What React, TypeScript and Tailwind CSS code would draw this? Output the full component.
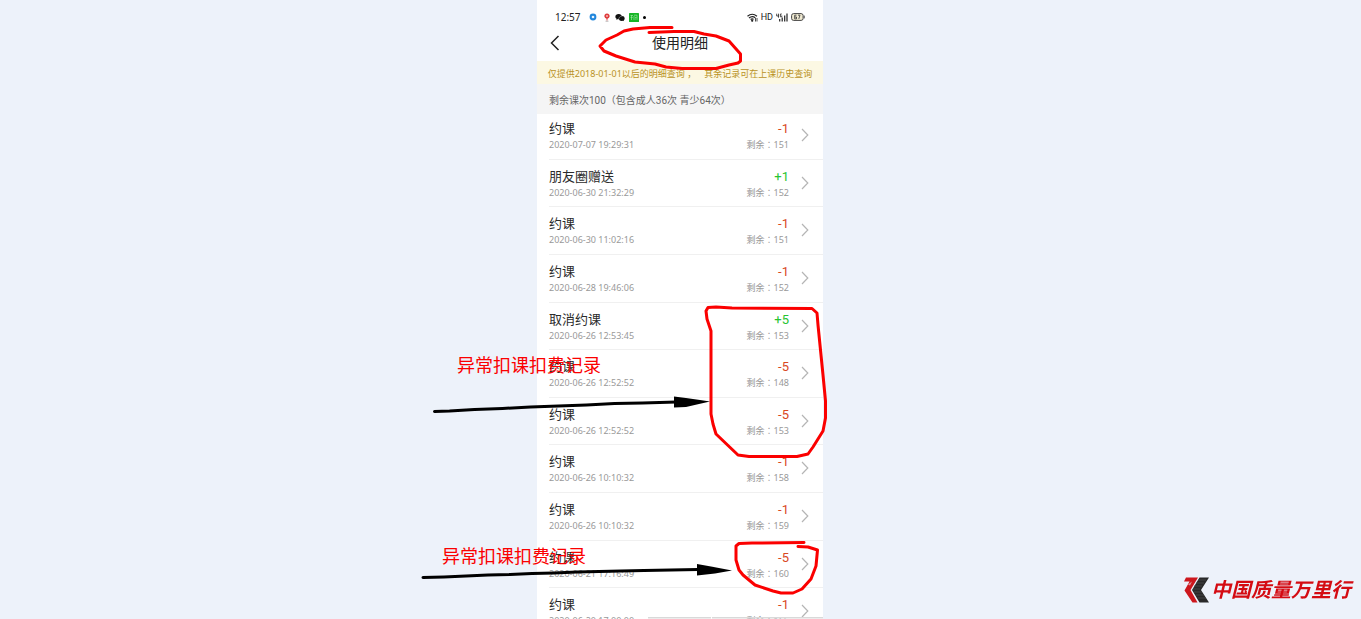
type RecordItem = { title: string; time: string; change: string; left: number };

const records: RecordItem[] = [
  { title: "约课", time: "2020-07-07 19:29:31", change: "-1", left: 151 },
  { title: "朋友圈赠送", time: "2020-06-30 21:32:29", change: "+1", left: 152 },
  { title: "约课", time: "2020-06-30 11:02:16", change: "-1", left: 151 },
  { title: "约课", time: "2020-06-28 19:46:06", change: "-1", left: 152 },
  { title: "取消约课", time: "2020-06-26 12:53:45", change: "+5", left: 153 },
  { title: "约课", time: "2020-06-26 12:52:52", change: "-5", left: 148 },
  { title: "约课", time: "2020-06-26 12:52:52", change: "-5", left: 153 },
  { title: "约课", time: "2020-06-26 10:10:32", change: "-1", left: 158 },
  { title: "约课", time: "2020-06-26 10:10:32", change: "-1", left: 159 },
  { title: "约课", time: "2020-06-21 17:16:49", change: "-5", left: 160 },
  { title: "约课", time: "2020-06-20 17:00:00", change: "-1", left: 165 },
];

function StatusBar() {
  return (
    <div className="flex h-6 items-end justify-between pl-[18px] pr-[18px] text-[10px] leading-[14px] text-[#222]">
      <div className="flex items-center">
        <span className="font-['Noto_Sans']">12:57</span>
        <svg className="ml-2" width="8" height="8" viewBox="0 0 8 8" aria-hidden="true">
          <circle cx="4" cy="4" r="3.4" fill="#2287dc" />
          <circle cx="4" cy="4" r="1.3" fill="#e8f4ff" />
        </svg>
        <svg className="ml-1.5" width="8" height="9" viewBox="0 0 8 9" aria-hidden="true">
          <path d="M4 8.4 3.3 5.6A2.6 2.6 0 1 1 4.7 5.6Z" fill="#df3b3b" />
          <circle cx="4" cy="3" r="1" fill="#f3b9b9" />
          <path d="M2.5 8.2h3" stroke="#999" strokeWidth=".7" />
        </svg>
        <svg className="ml-1" width="10" height="9" viewBox="0 0 11 9" aria-hidden="true">
          <path d="M4 .7C1.900.7.4 2 .4 3.600c0 .9.500 1.700 1.300 2.200L1.300 7l1.400-.7 1 .2 4.500-1.500C7.800 2 6.400.7 4 .7Z" fill="#111" />
          <ellipse cx="7.400" cy="5.600" rx="3.200" ry="2.700" fill="#111" />
          <path d="m8.500 7.500 1.100 1-.1-1.600Z" fill="#111" />
          <path d="M4.200 6.800C3.800 4.600 5.500 3.200 7.600 3" stroke="#fff" strokeWidth=".4" fill="none" />
        </svg>
        <svg className="ml-1" width="10" height="9" viewBox="0 0 10 9" aria-hidden="true">
          <rect width="10" height="9" rx=".6" fill="#16b526" />
          <path d="M1.500 2.500h2.500M1.500 4.500h2.200M2.500 2v5M5 2.200h3v4.600M5 3v4M6 4.500h1.500M6 6h1" stroke="#98e59e" strokeWidth=".7" fill="none" />
        </svg>
        <span className="ml-1 h-[3px] w-[3px] rounded-full bg-black" />
      </div>
      <div className="flex items-center gap-[3px]">
        <svg width="11" height="9" viewBox="0 0 11 9" fill="none" stroke="#222" strokeWidth="1.200" aria-hidden="true">
          <path d="M.5 3.200Q5.200-.7 10 3.200M2 5Q5.200 2.300 8.300 4.800M3.600 6.500Q5.200 5.300 6.600 6.400" />
          <circle cx="5.200" cy="7.700" r=".5" fill="#222" />
          <path d="M8.500 5v3.500M10 5v3.500" strokeWidth=".8" />
        </svg>
        <span className="font-['Roboto'] text-[9px]">HD</span>
        <svg width="12" height="9" viewBox="0 0 12 9" fill="none" stroke="#222" aria-hidden="true">
          <path d="M.7.700v2.300h2M2.500.7v4M5.800 1H4.400v2.800h1.400V2.500" strokeWidth=".8" />
          <path d="M3.700 8.500V6M6.200 8.500V4.500M8.700 8.500V2.500M11 8.500V.5" strokeWidth="1.200" />
        </svg>
        <svg width="14" height="8" viewBox="0 0 14 8" fill="none" aria-hidden="true">
          <rect x=".6" y=".6" width="11.500" height="6.800" rx="2" stroke="#444" fill="#f0ead2" />
          <path d="M13.200 2.600v2.800" stroke="#444" />
          <path d="M5.500 2.200H3.700v3.700h1.800V4H3.700M7 2.200h2L7.800 5.900" stroke="#333" strokeWidth=".8" />
        </svg>
      </div>
    </div>
  );
}

function RecordRow({ item }: { item: RecordItem }) {
  return (
    <li className="pl-3">
      <a
        href="#record"
        className="flex h-full items-start border-b border-[#f0f0f0] pr-[14px] pt-[7px]"
      >
        <span className="flex flex-1 flex-col">
          <span className="text-[13px] leading-[19px] text-[#2b2b2b]">{item.title}</span>
          <span className="font-['Noto_Sans'] text-[9px] leading-[14px] text-[#999]">{item.time}</span>
        </span>
        <span className="flex flex-col items-end">
          <span
            className={
              item.change.startsWith("+")
                ? "text-[13px] leading-[19px] text-[#27c432]"
                : "text-[13px] leading-[19px] text-[#d9481f]"
            }
          >
            {item.change}
          </span>
          <span className="font-['Noto_Sans','Noto_Sans_CJK_SC'] text-[9px] leading-[13px] text-[#999]">
            剩余<span className="font-['Noto_Sans_CJK_TC']" lang="zh-TW">：</span>{item.left}
          </span>
        </span>
        <svg className="ml-3 mt-[9px]" width="8" height="14" viewBox="0 0 8 14" fill="none" stroke="#b5b5b5" strokeWidth="1.200" aria-hidden="true">
          <path d="m1 1 5.800 6L1 13" />
        </svg>
      </a>
    </li>
  );
}

function Annotations() {
  return (
    <div className="pointer-events-none absolute -left-[120px] top-0 h-[619px] w-[420px]">
      <svg className="absolute inset-0" width="420" height="619" viewBox="417 0 420 619" fill="none" strokeLinecap="round" strokeLinejoin="round" aria-hidden="true">
        <path d="M648 617.700h63M712 617.700h111" stroke="#d9d9d9" strokeWidth="1.500" strokeLinecap="butt" />
        <g stroke="#fb0000" strokeWidth="3">
          <path d="M672 27.500H650L633 29 624 31 617 35 606 40 600 46 604 51 616 56 635 62 655 64 666 67 682 68.500H716L729 65 738 63 740.500 61V54L729 41 716 36 704 34 694 31.500 674 31.500 649 32.500" />
          <path d="M812 308.500 732 308 716 307 708 307.500 706 311 707 319 711 331 711 414 713 424 716 434 738 455 749 456.500H797L808 454 813 447 823 431 825.500 418V401L823 375 821 355 818 325 817 313Z" />
          <path d="M804 542.500 752 543 739 543.500 736 546V560L739 570 743 575 755 585 773 591 781 593H793L802 589 811 579 816 566 817.500 550 808 547 798 546.500" />
        </g>
        <g stroke="#000" strokeWidth="3">
          <path d="m434.500 411.500 15-.5 25-1.500 28-1 28-1.500 28-1 28-1 28-1.500 28-.5 34-1" />
          <path d="m423 577.500 21-.5 22-1 22-1 22-.5 22-1 22-.5 23-1 22-.5 22-.5 23-.5 54-1" />
        </g>
        <path d="M674 396.500 686 398 700 400 710 401.500 699 404 686 407 674 407.500Z" fill="#000" />
        <path d="M697 564 711 566.500 732 570.500 715 573.500 697 575.500Z" fill="#000" />
      </svg>
      <p className="absolute left-10 top-[354px] whitespace-nowrap text-[18px] leading-6 text-[#fb0000]">异常扣课扣费记录</p>
      <p className="absolute left-[25px] top-[545px] whitespace-nowrap text-[18px] leading-6 text-[#fb0000]">异常扣课扣费记录</p>
    </div>
  );
}

function SiteLogo() {
  return (
    <div className="fixed bottom-4 right-[10px] flex items-center gap-0.5">
      <svg width="25" height="26" viewBox="0 0 25 26" aria-hidden="true">
        <path d="M2 .5H14L6.500 13 13.500 25.500H8.500L.5 13.500 5.500 4.500H0Z" fill="#cd171d" />
        <path d="M4 7.500 8 4.500 6 8.500Z" fill="#e9eef7" opacity=".6" />
        <path d="M15.500.500H25L17 13 25 25.500H15.500L8 13Z" fill="#292929" />
        <path d="M14 3h8M12 6h8M10 9h8M9 12h7M10 15h8M12 18h8M14 21h8" stroke="#505050" strokeWidth=".7" />
      </svg>
      <span className="whitespace-nowrap text-[20px] font-bold italic leading-6 text-[#d40b12]">中国质量万里行</span>
    </div>
  );
}

export default function App() {
  return (
    <div className="flex h-screen justify-center overflow-hidden bg-[#edf2fa] pr-px font-['Roboto','Noto_Sans_CJK_SC',sans-serif]">
      <main className="relative w-[286px] shrink-0 bg-white">
        <StatusBar />
        <header className="relative flex h-[37px] items-center justify-center">
          <button type="button" aria-label="返回" className="absolute left-[13px] top-[11px]">
            <svg width="10" height="16" viewBox="0 0 10 16" fill="none" stroke="#222" strokeWidth="1.500" aria-hidden="true">
              <path d="M8.500 1 1.500 8l7 7" />
            </svg>
          </button>
          <h1 className="pt-px text-[14px] leading-5 text-[#222]">使用明细</h1>
        </header>
        <p className="flex h-[23px] items-center justify-center gap-2 whitespace-nowrap bg-[#fcf8e3] pt-0.5 font-['Noto_Sans','Noto_Sans_CJK_SC'] text-[9px] text-[#b9921f]">
          <span>仅提供2018-01-01以后的明细查询 ，</span>
          <span>其余记录可在上课历史查询</span>
        </p>
        <p className="relative z-10 -mb-0.5 flex h-[30px] items-center bg-[#f5f5f5] pl-3 pt-0.5 text-[10px] text-[#666]">
          剩余课次100（包含成人36次 青少64次）
        </p>
        <ul className="grid h-[524px] auto-rows-fr">
          {records.map((item, index) => (
            <RecordRow key={index} item={item} />
          ))}
        </ul>
        <Annotations />
      </main>
      <SiteLogo />
    </div>
  );
}
